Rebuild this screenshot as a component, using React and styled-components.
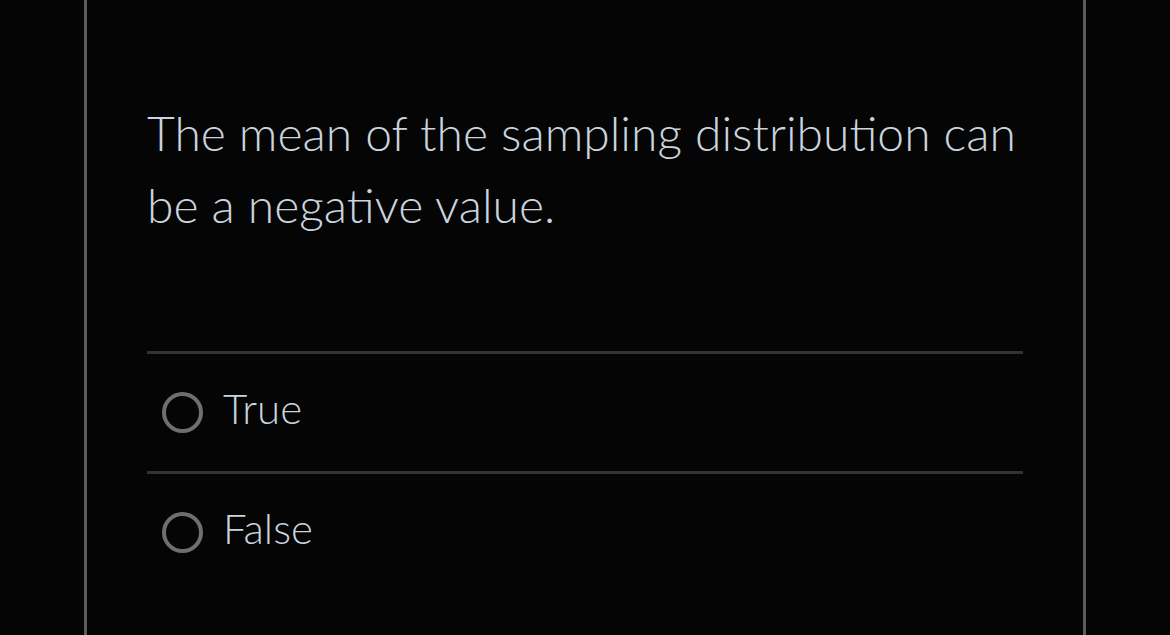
import React from "react";
import styled, { createGlobalStyle } from "styled-components";

const GlobalStyle = createGlobalStyle`
	html,
	body {
		margin: 0;
		padding: 0;
		background-color: #050505;
		overflow: hidden;
	}
	* {
		box-sizing: border-box;
	}
`;

const options = ["True", "False"];

const App = () => {
	return (
		<>
			<GlobalStyle />
			<Page>
				<Panel>
					<Question>
						The mean of the sampling distribution can be a negative value.
					</Question>
					<OptionList>
						{options.map((label) => (
							<Option key={label}>
								<Radio />
								<OptionLabel>{label}</OptionLabel>
							</Option>
						))}
					</OptionList>
				</Panel>
			</Page>
		</>
	);
};

const Page = styled.div`
	display: flex;
	justify-content: center;
	height: 100vh;
	background-color: #050505;
`;

const Panel = styled.section`
	width: 1002px;
	height: 100%;
	border-left: 3px solid #5b5b5b;
	border-right: 3px solid #5b5b5b;
	padding: 97px 60px 0 60px;
	font-family: Lato, "Open Sans", sans-serif;
	font-weight: 300;
	color: #c9d4de;
`;

const Question = styled.p`
	margin: 0;
	font-size: 48px;
	line-height: 72px;
`;

const OptionList = styled.div`
	margin-top: 110px;
	display: flex;
	flex-direction: column;
`;

const Option = styled.label`
	display: flex;
	align-items: center;
	height: 120px;
	border-top: 3px solid #333333;
	padding-left: 15px;
	gap: 20px;
	cursor: pointer;
`;

const Radio = styled.span`
	flex-shrink: 0;
	width: 41px;
	height: 41px;
	border-radius: 50%;
	border: 4px solid #6f6f6f;
`;

const OptionLabel = styled.span`
	font-size: 42px;
	line-height: 50px;
	margin-bottom: 10px;
`;

export default App;
